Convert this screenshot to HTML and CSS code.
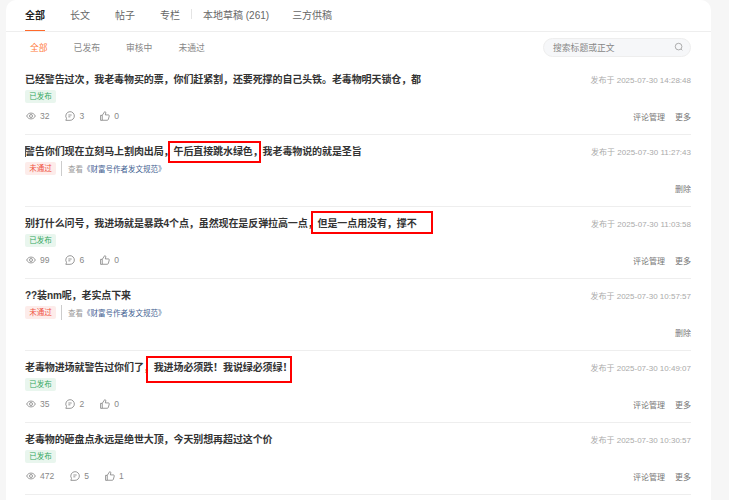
FILE: index.html
```html
<!DOCTYPE html>
<html lang="zh-CN">
<head>
  <meta charset="UTF-8">
  <title>内容管理</title>
  <link rel="stylesheet" href="styles.css">
</head>
<body>
  <svg class="sprite" aria-hidden="true">
    <symbol id="i-eye" viewBox="0 0 12 12"><path d="M.8 6C2 3.600 3.800 2.500 6 2.500S10 3.600 11.200 6C10 8.400 8.200 9.500 6 9.500S2 8.400.8 6z"/><circle cx="6" cy="6" r="1.800"/></symbol>
    <symbol id="i-comment" viewBox="0 0 12 12"><path d="M6 .8a5.200 5.200 0 0 1 0 10.400H1l.8-2.300A5.200 5.200 0 0 1 6 .8z"/><path d="M4 4.800h4M4 7h2.500"/></symbol>
    <symbol id="i-like" viewBox="0 0 12 12"><path d="M.7 5.200h2v6h-2zM2.700 5.200 5.600.8c1 0 1.500.7 1.300 1.600l-.5 2.300h3.700c.7 0 1.200.6 1 1.300l-1.100 4.100c-.2.600-.6 1-1.200 1H2.700"/></symbol>
  </svg>
  <div class="card">
    <div class="tabs">
      <a class="tab active">全部</a>
      <a class="tab">长文</a>
      <a class="tab">帖子</a>
      <a class="tab">专栏</a>
      <span class="tab-sep"></span>
      <a class="tab">本地草稿 (261)</a>
      <a class="tab">三方供稿</a>
    </div>
    <div class="filters">
      <a class="filter active">全部</a>
      <a class="filter">已发布</a>
      <a class="filter">审核中</a>
      <a class="filter">未通过</a>
      <div class="search">
        <span>搜索标题或正文</span>
        <svg class="search-icon" viewBox="0 0 12 12"><circle cx="5.500" cy="5.500" r="4"/><path d="M8.500 8.500 10 10"/></svg>
      </div>
    </div>
    <div class="list">
      <div class="item">
        <div class="row"><div class="title">已经警告过次&#65292;我老毒物买的票&#65292;你们赶紧割&#65292;还要死撑的自己头铁&#12290;老毒物明天锁仓&#65292;都</div><div class="date">发布于 2025-07-30 14:28:48</div></div>
        <div class="status"><span class="tag ok">已发布</span></div>
        <div class="row foot">
          <div class="stats">
            <span class="stat"><svg><use href="#i-eye"/></svg>32</span>
            <span class="stat"><svg><use href="#i-comment"/></svg>3</span>
            <span class="stat"><svg><use href="#i-like"/></svg>0</span>
          </div>
          <div class="actions"><a>评论管理</a><a>更多</a></div>
        </div>
      </div>
      <div class="item">
        <div class="row"><div class="title">警告你们现在立刻马上割肉出局&#65292;午后直接跳水绿色&#65292;我老毒物说的就是圣旨</div><div class="date">发布于 2025-07-30 11:27:43</div></div>
        <div class="status"><span class="tag bad">未通过</span><span class="status-sep"></span><span class="see">查看<a>《财富号作者发文规范》</a></span></div>
        <div class="row foot">
          <div class="stats"></div>
          <div class="actions"><a>删除</a></div>
        </div>
        <div class="caret"></div>
        <div class="mark mark-a"></div>
      </div>
      <div class="item">
        <div class="row"><div class="title">别打什么问号&#65292;我进场就是暴跌4个点&#65292;虽然现在是反弹拉高一点&#65292;但是一点用没有&#65292;撑不</div><div class="date">发布于 2025-07-30 11:03:58</div></div>
        <div class="status"><span class="tag ok">已发布</span></div>
        <div class="row foot">
          <div class="stats">
            <span class="stat"><svg><use href="#i-eye"/></svg>99</span>
            <span class="stat"><svg><use href="#i-comment"/></svg>6</span>
            <span class="stat"><svg><use href="#i-like"/></svg>0</span>
          </div>
          <div class="actions"><a>评论管理</a><a>更多</a></div>
        </div>
        <div class="mark mark-b"></div>
      </div>
      <div class="item">
        <div class="row"><div class="title">??装nm呢&#65292;老实点下来</div><div class="date">发布于 2025-07-30 10:57:57</div></div>
        <div class="status"><span class="tag bad">未通过</span><span class="status-sep"></span><span class="see">查看<a>《财富号作者发文规范》</a></span></div>
        <div class="row foot">
          <div class="stats"></div>
          <div class="actions"><a>删除</a></div>
        </div>
      </div>
      <div class="item">
        <div class="row"><div class="title">老毒物进场就警告过你们了&#65292;我进场必须跌&#65281;我说绿必须绿&#65281;</div><div class="date">发布于 2025-07-30 10:49:07</div></div>
        <div class="status"><span class="tag ok">已发布</span></div>
        <div class="row foot">
          <div class="stats">
            <span class="stat"><svg><use href="#i-eye"/></svg>35</span>
            <span class="stat"><svg><use href="#i-comment"/></svg>2</span>
            <span class="stat"><svg><use href="#i-like"/></svg>0</span>
          </div>
          <div class="actions"><a>评论管理</a><a>更多</a></div>
        </div>
        <div class="mark mark-c"></div>
      </div>
      <div class="item">
        <div class="row"><div class="title">老毒物的砸盘点永远是绝世大顶&#65292;今天别想再超过这个价</div><div class="date">发布于 2025-07-30 10:30:57</div></div>
        <div class="status"><span class="tag ok">已发布</span></div>
        <div class="row foot">
          <div class="stats">
            <span class="stat"><svg><use href="#i-eye"/></svg>472</span>
            <span class="stat"><svg><use href="#i-comment"/></svg>5</span>
            <span class="stat"><svg><use href="#i-like"/></svg>1</span>
          </div>
          <div class="actions"><a>评论管理</a><a>更多</a></div>
        </div>
      </div>
    </div>
  </div>
</body>
</html>
```

FILE: styles.css
```css
* { box-sizing: border-box; }
html, body { height: 500px; overflow: hidden; }
body { margin: 0; background: #f6f6f6; font-family: "Liberation Sans", "Noto Sans CJK SC", sans-serif; color: #333; }
.sprite { display: none; }
.card { width: 705px; height: 500px; margin-left: 6px; background: #fff; border-radius: 10px 10px 0 0; padding: 0 20px 0 19px; }

.tabs { display: flex; align-items: center; height: 32px; margin: 0 -20px 0 -19px; padding: 0 19px; border-bottom: 1px solid #eee; gap: 25px; }
.tab { position: relative; font-size: 10px; line-height: 30px; padding-top: 1px; color: #666; white-space: nowrap; }
.tab.active { color: #222; font-weight: bold; }
.tab.active::after { content: ""; position: absolute; left: 0; right: 0; bottom: 0; height: 1px; background: #ff6a2b; }
.tab-sep { width: 1px; height: 10px; background: #e4e4e4; margin: -4px -14px 0 -14px; }
.tab-sep + .tab { margin-right: -2px; }

.filters { display: flex; align-items: center; height: 30px; padding-left: 5px; gap: 26px; }
.filter { font-size: 8.800px; color: #888; }
.filter.active { color: #ff7a3d; }
.search { display: flex; align-items: center; justify-content: space-between; width: 148px; height: 19px; margin-left: auto; padding: 0 6px 0 9px; background: #f6f7f9; border: 1px solid #eee; border-radius: 10px; font-size: 8.800px; color: #888; }
.search-icon { width: 10px; height: 10px; fill: none; stroke: #888; stroke-width: .8; }

.list { margin-top: 1px; }
.item { position: relative; height: 72px; padding-top: 9px; border-bottom: 1px solid #eee; }
.row { display: flex; justify-content: space-between; align-items: center; height: 14px; }
.title { margin-top: -1px; font-size: 10px; font-weight: bold; color: #333; white-space: nowrap; letter-spacing: -.1px; }
.date { font-size: 8px; color: #aaa; white-space: nowrap; }

.status { display: flex; align-items: center; height: 13px; margin-top: 4px; }
.tag { width: 31px; height: 13px; border-radius: 2px; font-size: 7.500px; line-height: 13px; text-align: center; }
.tag.ok { background: #e9f6ee; color: #35a85f; }
.tag.bad { background: #fdecea; color: #f0523f; }
.status-sep { width: 1px; height: 15px; margin: 0 6px 0 5px; background: #ccc; }
.see { font-size: 7.500px; color: #999; }
.see a { color: #3f5f92; }

.foot { margin-top: 6px; }
.stats { display: flex; gap: 16px; margin-left: 1px; }
.stat { display: flex; align-items: center; gap: 4px; font-size: 8.500px; color: #888; }
.stat svg { width: 10px; height: 10px; fill: none; stroke: #777; stroke-width: .9; }
.actions { display: flex; gap: 10px; font-size: 8px; color: #777; }

.caret { position: absolute; left: 0; top: 11px; width: 1px; height: 11px; background: #555; }
.mark { position: absolute; border: 2px solid #f00; }
.mark-a { left: 143px; top: 6px; width: 93px; height: 22px; }
.mark-b { left: 286px; top: 4px; width: 122px; height: 23px; }
.mark-c { left: 121px; top: 5px; width: 146px; height: 27px; }
```
